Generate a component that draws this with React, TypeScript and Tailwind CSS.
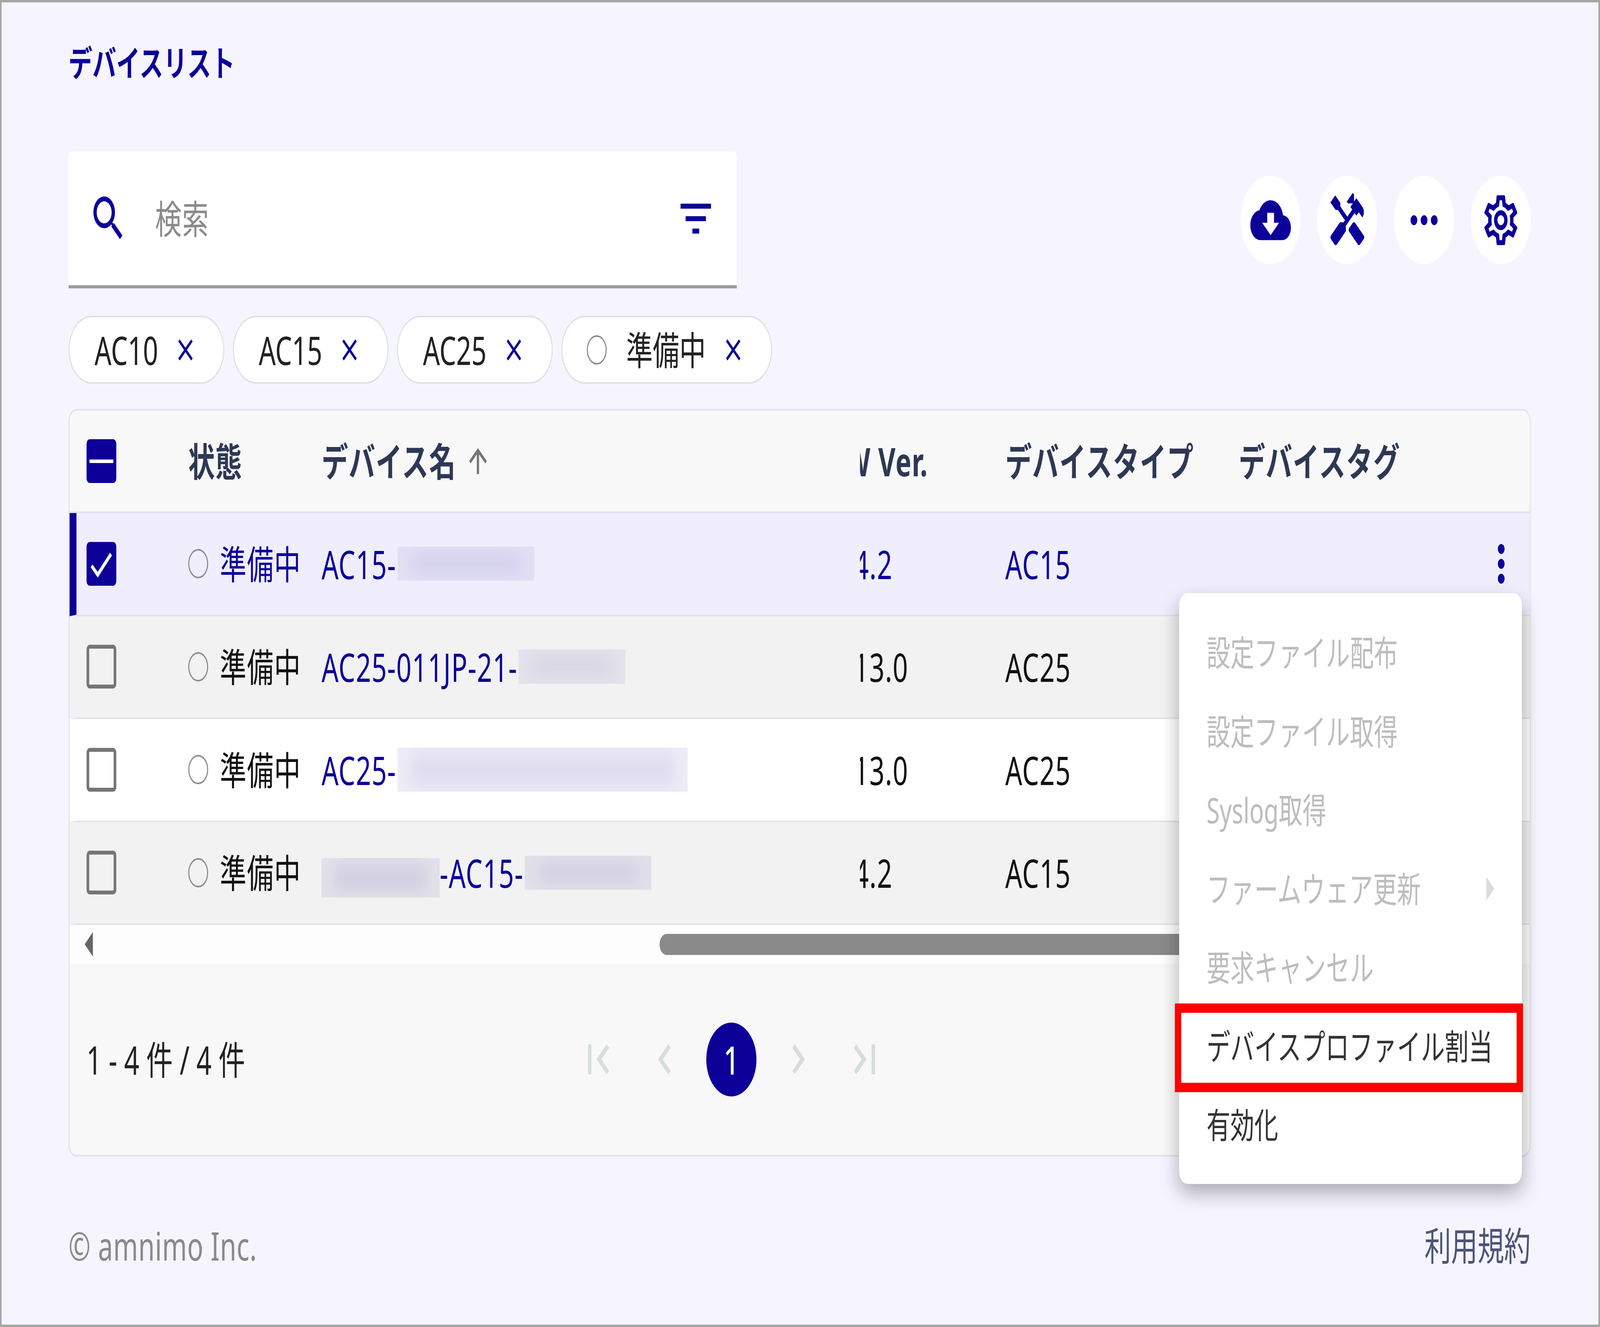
import {
  MdArrowUpward,
  MdChevronLeft,
  MdChevronRight,
  MdClose,
  MdCloudDownload,
  MdFilterList,
  MdFirstPage,
  MdHandyman,
  MdLastPage,
  MdMoreHoriz,
  MdMoreVert,
  MdOutlineSettings,
  MdSearch,
} from "react-icons/md";

function Blur({ w, h, edge, core, className = "" }: { w: number; h: number; edge: string; core: string; className?: string }) {
  return (
    <span className={`block shrink-0 overflow-hidden ${edge} ${className}`} style={{ width: w, height: h }}>
      <span className={`mx-[50px] my-[20px] block h-[calc(100%-40px)] blur-[24px] ${core}`} />
    </span>
  );
}

function Chip({ label, status }: { label: string; status?: boolean }) {
  return (
    <div className="flex h-[174px] items-center rounded-full border-[4px] border-[#dbe3e3] bg-white pl-[94px] pr-[96px]">
      {status && <span className="mr-[74px] -ml-[2px] h-[75px] w-[75px] rounded-full border-[4px] border-[#8a8a8a]" />}
      <span className="text-[100px] leading-none text-[#222]">{label}</span>
      <MdClose className="ml-[56px] h-[93px] w-[93px] text-[#0c0099]" />
    </div>
  );
}

function Checkbox({ state }: { state: "on" | "off" | "some" }) {
  if (state === "off") {
    return <span className="block h-[112px] w-[112px] rounded-[12px] border-[10px] border-[#757575]" />;
  }
  return (
    <span className="flex h-[112px] w-[112px] items-center justify-center rounded-[12px] bg-[#0c0099]">
      {state === "some" ? (
        <span className="h-[9px] w-[90px] bg-white" />
      ) : (
        <svg viewBox="0 0 112 112" className="h-[112px] w-[112px]">
          <path d="M19 61l23 23 50-53" fill="none" stroke="#fff" strokeWidth="10" />
        </svg>
      )}
    </span>
  );
}

const rows = [
  { bg: "bg-[#f0eefd]", selected: true, name: "AC15-", w: 516, h: 87, edge: "bg-[#e3e0f5]", core: "bg-[#d2ceee]", ver: "1.4.2", type: "AC15" },
  { bg: "bg-[#f2f2f2]", selected: false, name: "AC25-011JP-21-", w: 402, h: 88, edge: "bg-[#e4e3ec]", core: "bg-[#d6d4e3]", ver: "1.13.0", type: "AC25" },
  { bg: "bg-white", selected: false, name: "AC25-", w: 1093, h: 113, edge: "bg-[#eeecf7]", core: "bg-[#dddbee]", ver: "1.13.0", type: "AC25" },
  { bg: "bg-[#f2f2f2]", selected: false, name: "-AC15-", w: 478, h: 87, lead: 445, edge: "bg-[#e2e1ea]", core: "bg-[#d0cde0]", ver: "1.4.2", type: "AC15" },
];

const menuItems = [
  { label: "設定ファイル配布", off: true },
  { label: "設定ファイル取得", off: true },
  { label: "Syslog取得", off: true },
  { label: "ファームウェア更新", off: true, sub: true },
  { label: "要求キャンセル", off: true },
  { label: "デバイスプロファイル割当", off: false },
  { label: "有効化", off: false },
];

export default function App() {
  // the design is 6026 wide; narrower windows (the sandbox caps at 4096) get a horizontal squeeze
  const fit = Math.min(1, window.innerWidth / 6026);

  return (
    <div className="h-[3396px] w-full overflow-hidden">
      <div
        className="relative flex h-[3396px] w-[6026px] origin-top-left flex-col overflow-hidden border-[6px] border-[#a6a6a6] bg-[#f6f5ff] pl-[252px] pr-[255px] font-['Noto_Sans','Noto_Sans_CJK_JP',sans-serif]"
        style={{ transform: `scaleX(${fit})` }}
      >
        <h1 className="mt-[79px] h-[150px] text-[90px] font-bold leading-[150px] text-[#0c0099]">デバイスリスト</h1>

        {/* Search + actions */}
        <div className="mt-[153px] flex items-center justify-between">
          <div className="flex h-[350px] w-[2517px] items-center rounded-t-[14px] border-b-[8px] border-[#9b9b9b] bg-white pl-[75px] pr-[78px]">
            <MdSearch className="h-[150px] w-[150px] text-[#0c0099]" />
            <span className="ml-[101px] flex-1 text-[100px] tracking-[2px] text-[#8a8a8a]">検索</span>
            <MdFilterList className="h-[153px] w-[153px] text-[#0c0099]" />
          </div>
          <div className="flex gap-[63px]">
            {[MdCloudDownload, MdHandyman, MdMoreHoriz, MdOutlineSettings].map((Icon, i) => (
              <button key={i} className="flex h-[226px] w-[226px] items-center justify-center rounded-full bg-white">
                <Icon className="h-[153px] w-[153px] text-[#0c0099]" />
              </button>
            ))}
          </div>
        </div>

        {/* Filter chips */}
        <div className="mt-[70px] flex gap-[32px]">
          <Chip label="AC10" />
          <Chip label="AC15" />
          <Chip label="AC25" />
          <Chip label="準備中" status />
        </div>

        {/* Table */}
        <div className="mt-[65px] h-[1913px] overflow-hidden rounded-[30px] border-[4px] border-[#e3e1ef] bg-[#f8f8f8]">
          <div className="flex h-[262px] items-center border-b-[4px] border-[#e3e1ef] pl-[64px] text-[100px] font-bold tracking-[2px] text-[#2d3855]">
            <div className="w-[383px]">
              <Checkbox state="some" />
            </div>
            <div className="w-[502px]">状態</div>
            <div className="flex w-[2028px] items-center">
              デバイス名
              <MdArrowUpward className="ml-[32px] h-[100px] w-[100px] text-[#757575]" />
            </div>
            <div className="w-[547px] overflow-hidden">
              <div className="-ml-[115px] whitespace-nowrap">FW Ver.</div>
            </div>
            <div className="w-[879px]">デバイスタイプ</div>
            <div>デバイスタグ</div>
          </div>

          {rows.map((r, i) => {
            const text = r.selected ? "text-[#0c0099]" : "text-[#111]";
            return (
              <div
                key={i}
                className={`flex h-[263.5px] items-center border-b-[4px] border-b-[#e3e1ef] border-l-[26px] pl-[38px] pr-[31px] text-[100px] tracking-[2px] ${r.bg} ${
                  r.selected ? "border-l-[#0c0099]" : "border-l-transparent"
                }`}
              >
                <div className="w-[383px]">
                  <Checkbox state={r.selected ? "on" : "off"} />
                </div>
                <div className={`flex w-[502px] items-center ${text}`}>
                  <span className="mr-[44px] h-[75px] w-[75px] rounded-full border-[4px] border-[#8a8a8a]" />
                  準備中
                </div>
                <div className="flex w-[2028px] items-center text-[#0c0099]">
                  {r.lead && <Blur w={r.lead} h={101} edge={r.edge} core={r.core} className="mt-[26px]" />}
                  <span>{r.name}</span>
                  <Blur w={r.w} h={r.h} edge={r.edge} core={r.core} className="ml-[4px]" />
                </div>
                <div className={`w-[547px] overflow-hidden ${text}`}>
                  <div className="-ml-[112px] whitespace-nowrap">{r.ver}</div>
                </div>
                <div className={`w-[879px] ${text}`}>{r.type}</div>
                <div className="flex flex-1 justify-end">
                  {r.selected && <MdMoreVert className="h-[152px] w-[152px] text-[#0c0099]" />}
                </div>
              </div>
            );
          })}

          {/* Horizontal scrollbar */}
          <div className="flex h-[99px] items-center bg-[#fdfdfd] pl-[57px]">
            <svg viewBox="0 0 31 63" className="h-[63px] w-[31px] shrink-0">
              <path d="M31 0v63L0 31.5z" fill="#666" />
            </svg>
            <div className="ml-[2134px] h-[54px] w-[2300px] rounded-full bg-[#8a8a8a]" />
          </div>

          {/* Pagination */}
          <div className="flex h-[490px] items-center pl-[64px] text-[100px]">
            <div className="w-[1801px] text-[#222]">1 - 4 件 / 4 件</div>
            {[MdFirstPage, MdChevronLeft, null, MdChevronRight, MdLastPage].map((Icon, i) => (
              <div key={i} className="flex w-[251px] justify-center">
                {Icon ? (
                  <Icon className="h-[154px] w-[154px] text-[#d5dedd]" />
                ) : (
                  <span className="flex h-[189px] w-[189px] items-center justify-center rounded-full bg-[#0c0099] font-medium text-white">
                    1
                  </span>
                )}
              </div>
            ))}
          </div>
        </div>

        {/* Footer */}
        <div className="mt-[152px] flex h-[150px] items-center justify-between text-[100px] leading-[150px]">
          <span className="tracking-[1px] text-[#8a8a8a]">© amnimo Inc.</span>
          <span className="text-[#4a5578]">利用規約</span>
        </div>

        {/* Row action menu */}
        <div className="absolute left-[4435px] top-[1512px] flex h-[1512px] w-[1291px] flex-col justify-center rounded-[32px] bg-white shadow-[0_24px_60px_rgba(0,0,0,0.3)]">
          {menuItems.map((m) => (
            <div
              key={m.label}
              className={`flex h-[201.5px] items-center justify-between whitespace-nowrap pl-[103px] pr-[104px] text-[90px] ${
                m.off ? "text-[#bdbdbd]" : "text-[#333]"
              }`}
            >
              {m.label}
              {m.sub && (
                <svg viewBox="0 0 30 61" className="h-[61px] w-[30px]">
                  <path d="M0 0v61l30-30.500z" fill="#dcdcdc" />
                </svg>
              )}
            </div>
          ))}
        </div>

        {/* Red annotation box */}
        <div className="absolute left-[4419px] top-[2562px] h-[227px] w-[1311px] border-[24px] border-[#ff0000]" />
      </div>
    </div>
  );
}
